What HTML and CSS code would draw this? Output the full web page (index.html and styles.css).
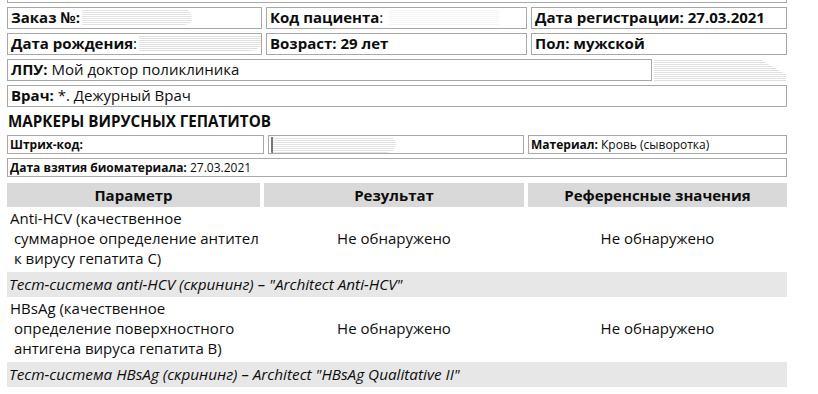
FILE: index.html
```html
<!DOCTYPE html>
<html lang="ru">
<head>
<meta charset="utf-8">
<link rel="stylesheet" href="styles.css">
</head>
<body>
<div class="page">
  <div class="prev-box"></div>

  <div class="grid3 top">
    <div class="field"><b>Заказ №:</b><span class="smear smear-a"></span></div>
    <div class="field"><b>Код пациента</b>:<span class="smear smear-b"></span></div>
    <div class="field"><b>Дата регистрации: 27.03.2021</b></div>
    <div class="field"><b>Дата рождения</b>:<span class="smear smear-c"></span></div>
    <div class="field"><b>Возраст: 29 лет</b></div>
    <div class="field"><b>Пол: мужской</b></div>
  </div>

  <div class="row-lpu">
    <div class="field wide"><b>ЛПУ:</b> Мой доктор поликлиника</div>
    <div class="smear smear-d"></div>
  </div>
  <div class="field full"><b>Врач:</b> *. Дежурный Врач</div>

  <h2 class="title">МАРКЕРЫ ВИРУСНЫХ ГЕПАТИТОВ</h2>

  <div class="grid3 small">
    <div class="field sm"><b>Штрих-код:</b></div>
    <div class="field sm barcode"><span class="smear smear-e"></span></div>
    <div class="field sm"><b>Материал:</b> Кровь (сыворотка)</div>
  </div>
  <div class="field sm full"><b>Дата взятия биоматериала:</b> 27.03.2021</div>

  <div class="results">
    <div class="thead">
      <div class="th">Параметр</div>
      <div class="th">Результат</div>
      <div class="th">Референсные значения</div>
    </div>
    <div class="tr">
      <div class="td param">Anti-HCV (качественное<br>&nbsp;суммарное определение антител<br>&nbsp;к вирусу гепатита С)</div>
      <div class="td center">Не обнаружено</div>
      <div class="td center">Не обнаружено</div>
    </div>
    <div class="note">Тест-система anti-HCV (скрининг) – "Architect Anti-HCV"</div>
    <div class="tr">
      <div class="td param">HBsAg (качественное<br>&nbsp;определение поверхностного<br>&nbsp;антигена вируса гепатита В)</div>
      <div class="td center">Не обнаружено</div>
      <div class="td center">Не обнаружено</div>
    </div>
    <div class="note">Тест-система HBsAg (скрининг) – Architect "HBsAg Qualitative II"</div>
  </div>
</div>
</body>
</html>
```

FILE: styles.css
```css
* { box-sizing: border-box; }
html, body { margin: 0; padding: 0; background: #fff; }
body {
  font-family: "Open Sans", "Noto Sans", sans-serif;
  color: #0d0d0d;
  overflow: hidden;
}
.page {
  width: 780px;
  margin-left: 7px;
  display: flex;
  flex-direction: column;
}
.prev-box {
  height: 3px;
  border: 1px solid #a8a8a8;
  border-top: none;
  margin-bottom: 4px;
}
.grid3 {
  display: grid;
  gap: 4px;
}
.grid3.top {
  grid-template-columns: 255px 261px 256px;
  row-gap: 4px;
}
.field {
  height: 22px;
  border: 1px solid #a8a8a8;
  padding: 0 3px;
  font-size: 15px;
  line-height: 19px;
  white-space: nowrap;
  overflow: hidden;
}
.field b { font-weight: 700; }
.smear {
  display: inline-block;
  vertical-align: middle;
  background: repeating-linear-gradient(to bottom, #fff 0, #fff 1px, #dcdcdc 1px, #dcdcdc 2px);
  opacity: 0.8;
  filter: blur(0.4px);
}
.smear-a { width: 110px; height: 16px; margin: -3px 0 0 2px; border-radius: 4px 40px 40px 2px; }
.smear-b { width: 110px; height: 16px; margin: -3px 0 0 6px; opacity: 0.3; }
.smear-c { width: 125px; height: 16px; margin: -3px 0 0 2px; border-radius: 2px 6px 40px 2px; opacity: 0.9; }
.smear-d { width: 132px; height: 22px; margin-left: 2px; opacity: 0.9; clip-path: polygon(0 0, 80% 0, 100% 70%, 100% 100%, 0 100%); }
.smear-e { width: 125px; height: 16px; margin-top: -2px; border-radius: 2px 30px 40px 6px; border-left: 2px solid #555; }
.row-lpu {
  display: flex;
  margin-top: 4px;
  height: 22px;
}
.field.wide { width: 645px; }
.field.full { margin-top: 4px; width: 780px; }
.title {
  margin: 4px 0 0 1px;
  font-size: 15.2px;
  line-height: 20px;
  font-weight: 700;
  color: #0d0d0d;
}
.grid3.small {
  grid-template-columns: 257px 256px 259px;
  margin-top: 4px;
}
.field.sm {
  height: 19px;
  font-size: 12px;
  line-height: 17px;
  padding: 0 2px;
}
.field.barcode { padding: 0 0 0 2px; }
.field.sm.full { margin-top: 4px; }
.results {
  margin-top: 6px;
  display: flex;
  flex-direction: column;
}
.thead, .tr {
  display: grid;
  grid-template-columns: 253px 260px 259px;
  column-gap: 4px;
}
.th {
  background: #d9d9d9;
  height: 24px;
  font-weight: 700;
  font-size: 15px;
  line-height: 24px;
  text-align: center;
}
.tr { height: 65px; }
.td {
  font-size: 15px;
  line-height: 20px;
  padding: 1px 0 4px;
}
.td.param { padding-left: 3px; }
.td.center {
  display: flex;
  align-items: center;
  justify-content: center;
}
.note {
  background: #e7e7e7;
  height: 25px;
  line-height: 25px;
  font-style: italic;
  font-size: 15.3px;
  padding-left: 2px;
}
```
